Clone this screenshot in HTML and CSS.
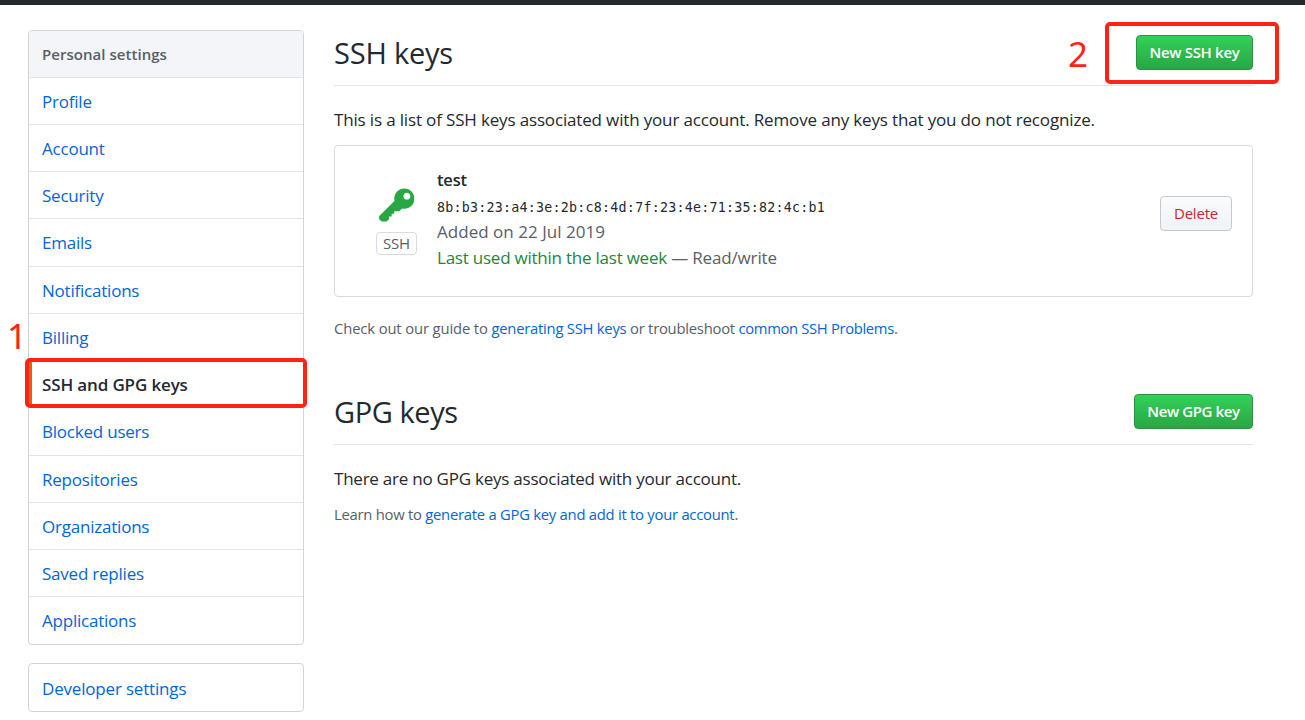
FILE: index.html
```html
<!DOCTYPE html>
<html lang="en">
<head>
<meta charset="utf-8">
<title>SSH and GPG keys</title>
<link rel="stylesheet" href="styles.css">
</head>
<body>
<div class="topbar"></div>
<div class="page">
  <aside class="sidebar">
    <nav class="menu">
      <h3 class="menu-heading">Personal settings</h3>
      <a class="menu-item">Profile</a>
      <a class="menu-item">Account</a>
      <a class="menu-item">Security</a>
      <a class="menu-item">Emails</a>
      <a class="menu-item">Notifications</a>
      <a class="menu-item">Billing</a>
      <a class="menu-item selected">SSH and GPG keys<span class="marker marker-menu"></span><span class="step step-one">1</span></a>
      <a class="menu-item">Blocked users</a>
      <a class="menu-item">Repositories</a>
      <a class="menu-item">Organizations</a>
      <a class="menu-item">Saved replies</a>
      <a class="menu-item">Applications</a>
    </nav>
    <nav class="menu">
      <a class="menu-item menu-item-single">Developer settings</a>
    </nav>
  </aside>
  <main class="content">
    <header class="subhead">
      <h2 class="title">SSH keys</h2>
      <div class="action">
        <button class="btn btn-primary">New SSH key</button>
        <span class="marker marker-button"></span><span class="step step-two">2</span>
      </div>
    </header>
    <p class="intro">This is a list of SSH keys associated with your account. Remove any keys that you do not recognize.</p>
    <section class="card">
      <div class="key-type">
        <svg class="key-icon" viewBox="0 0 14 16"><path d="M12.83 2.17C12.08 1.42 11.14 1.03 10 1c-1.13.03-2.08.42-2.83 1.17S6.04 3.86 6.01 5c0 .3.03.59.09.89L.3 11.7Q0 12 0 12.4v.6l1 1h2l1-1v-1h1v-1h1v-1h2l1.09-1.11c.3.08.59.11.91.11 1.14-.03 2.08-.42 2.83-1.17S13.97 6.14 14 5c-.03-1.14-.42-2.08-1.17-2.83zM11 5.38c-.77 0-1.38-.61-1.38-1.38 0-.77.61-1.38 1.38-1.38.77 0 1.38.61 1.38 1.38 0 .77-.61 1.38-1.38 1.38z"/></svg>
        <span class="tag">SSH</span>
      </div>
      <div class="key-info">
        <strong class="key-name">test</strong>
        <code class="fingerprint">8b:b3:23:a4:3e:2b:c8:4d:7f:23:4e:71:35:82:4c:b1</code>
        <span class="added">Added on 22 Jul 2019</span>
        <span class="usage"><span class="recent">Last used within the last week</span><span class="access"> — Read/write</span></span>
      </div>
      <button class="btn btn-danger">Delete</button>
    </section>
    <p class="help"><span class="lead">Check out our guide to </span><a>generating SSH keys</a> or troubleshoot <a class="tight">common SSH Problems</a>.</p>
    <header class="subhead subhead-gpg">
      <h2 class="title title-gpg">GPG keys</h2>
      <button class="btn btn-primary btn-gpg">New GPG key</button>
    </header>
    <p class="intro intro-gpg">There are no GPG keys associated with your account.</p>
    <p class="help help-gpg">Learn how to <a>generate a GPG key and add it to your account</a>.</p>
  </main>
</div>
</body>
</html>
```
FILE: styles.css
```css
* { box-sizing: border-box; }
body {
  margin: 0;
  height: 720px;
  overflow: hidden;
  background: #fff;
  color: #24292e;
  font: 17px/26px "Open Sans", sans-serif;
  letter-spacing: -0.16px;
}
h2, h3, p { margin: 0; font-weight: 400; }
a { color: #0366d6; }
.topbar { height: 5px; background: #24292e; }
.page { display: flex; gap: 30px; padding: 25px 0 0 28px; }

.sidebar { width: 276px; flex: none; }
.menu {
  margin-bottom: 18px;
  border: 1px solid #d1d5da;
  border-radius: 4px;
}
.menu-heading {
  height: 46.8px;
  border-bottom: 1px solid #e1e4e8;
  border-radius: 3px 3px 0 0;
  padding-left: 13px;
  background: #f3f5f8;
  color: #586069;
  font-size: 15px;
  font-weight: 600;
  line-height: 47px;
  letter-spacing: 0.04px;
}
.menu-item {
  display: block;
  position: relative;
  height: 47.22px;
  border-bottom: 1px solid #e1e4e8;
  padding-left: 13px;
  line-height: 47px;
  letter-spacing: -0.22px;
}
.menu-item:last-child { border-bottom: 0; }
.menu-item-single { height: 46.8px; line-height: 49px; letter-spacing: -0.18px; }
.selected { color: #24292e; font-weight: 600; letter-spacing: -0.14px; box-shadow: inset 3px 0 #e36209; }

.marker {
  position: absolute;
  border: 4px solid #ff2316;
  border-radius: 5px;
}
.marker-menu { left: -4px; top: -3px; width: 282px; height: 50px; }
.marker-button { left: -31px; top: -13px; width: 174px; height: 62px; }
.step {
  position: absolute;
  color: #ff2316;
  font-family: "Noto Sans", sans-serif;
  font-weight: 400;
  letter-spacing: 0;
}
.step-one { left: -22px; top: -49px; font-size: 35px; }
.step-two { left: -68px; top: 6px; font-size: 35px; }

.content { width: 919px; }
.subhead {
  display: flex;
  justify-content: space-between;
  align-items: flex-start;
  height: 56px;
  border-bottom: 1px solid #e1e4e8;
  padding-top: 5px;
}
.title { font-size: 29px; line-height: 36px; letter-spacing: -0.2px; }
.title-gpg { letter-spacing: -0.42px; }
.action { position: relative; }
.btn {
  display: block;
  width: 117px;
  height: 35px;
  border: 1px solid #c5c9cd;
  border-radius: 4px;
  padding: 0 0 1px;
  font: 600 15px/32px "Open Sans", sans-serif;
  letter-spacing: -0.33px;
}
.btn-primary {
  border-color: #29933f;
  background: linear-gradient(#34d058, #28a745);
  color: #fff;
}
.btn-gpg { width: 119px; letter-spacing: -0.4px; }
.btn-danger {
  width: 72px;
  background: linear-gradient(#fafbfc, #eff3f6);
  color: #cb2431;
  font-weight: 500;
  letter-spacing: -0.2px;
}
.intro { margin-top: 21px; letter-spacing: -0.157px; }
.card {
  display: flex;
  align-items: flex-start;
  height: 152px;
  margin-top: 12px;
  border: 1px solid #d8dbdf;
  border-radius: 4px;
  padding: 21px 20px 0 41px;
}
.key-type { display: flex; flex-direction: column; align-items: center; width: 41px; padding-top: 18.5px; }
.key-icon { width: 35.5px; height: 40.5px; fill: #28a745; }
.tag {
  width: 41px;
  height: 23px;
  margin-top: 5.5px;
  border: 1px solid #d8dbdf;
  border-radius: 4px;
  color: #586069;
  font-size: 15px;
  line-height: 21px;
  text-align: center;
}
.key-info { display: flex; flex-direction: column; flex: 1; padding-left: 20px; color: #586069; }
.key-name { color: #24292e; font-size: 16.5px; font-weight: 600; }
.fingerprint { color: #24292e; font: 13.3px/26px "DejaVu Sans Mono", monospace; letter-spacing: 0.25px; padding-top: 2px; }
.added { line-height: 25px; margin-top: -2px; letter-spacing: 0.03px; }
.usage { white-space: pre; line-height: 26px; margin-top: 1px; }
.recent { color: #22863a; letter-spacing: -0.23px; }
.access { letter-spacing: -0.16px; }
.card .btn { margin-top: 29px; }
.help { margin-top: 18px; color: #586069; font-size: 14.8px; letter-spacing: -0.238px; }
.lead { letter-spacing: -0.13px; }
.tight { letter-spacing: -0.34px; }
.subhead-gpg { margin-top: 48px; }
.intro-gpg { letter-spacing: -0.235px; }
.help-gpg { margin-top: 9px; letter-spacing: -0.25px; }
```
